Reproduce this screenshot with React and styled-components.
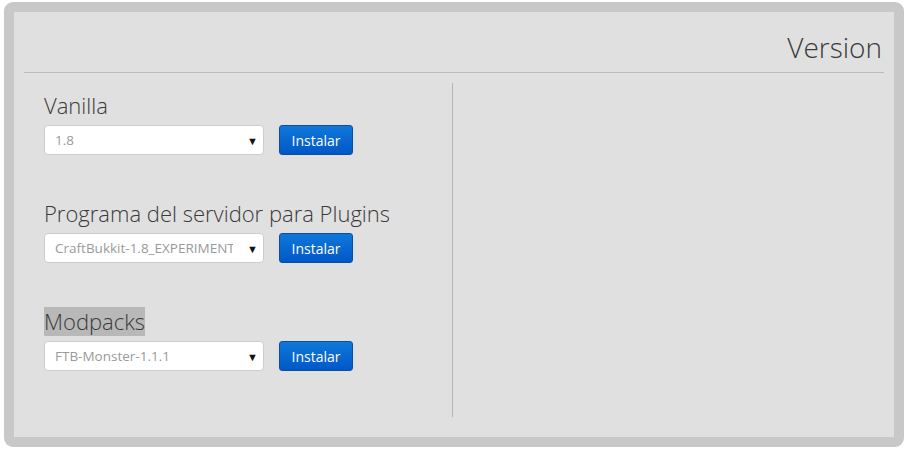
import styled, {createGlobalStyle} from 'styled-components'

const Global = createGlobalStyle`
	body {
		margin: 0;
		background: #fff;
		font-family: "Open Sans", "Liberation Sans", sans-serif;
	}
`

const groups = [
	{label: 'Vanilla', value: '1.8'},
	{label: 'Programa del servidor para Plugins', value: 'CraftBukkit-1.8_EXPERIMENTAL'},
	{label: 'Modpacks', value: 'FTB-Monster-1.1.1', marked: true},
]

function App() {
	return (
		<>
			<Global />
			<Page>
				<Frame>
					<Panel>
						<Header>
							<Title>Version</Title>
						</Header>
						<Body>
							<Column>
								{groups.map((g) => (
									<Group key={g.label}>
										<Label $marked={g.marked}>{g.label}</Label>
										<Row>
											<Select>
												<Value>{g.value}</Value>
												<Arrow>▼</Arrow>
											</Select>
											<Button>Instalar</Button>
										</Row>
									</Group>
								))}
							</Column>
						</Body>
					</Panel>
				</Frame>
			</Page>
		</>
	)
}

const Page = styled.div`
	padding: 2px 4px;
`

const Frame = styled.div`
	width: 900px;
	height: 445px;
	box-sizing: border-box;
	background: #c8c8c8;
	border-radius: 9px;
	padding: 10px;
`

const Panel = styled.div`
	height: 100%;
	background: #e0e0e0;
	padding: 0 10px;
	box-sizing: border-box;
`

const Header = styled.div`
	height: 60px;
	border-bottom: 1px solid #bcbcbc;
	display: flex;
	justify-content: flex-end;
	align-items: flex-end;
	padding-right: 2px;
`

const Title = styled.h1`
	margin: 0 0 7px;
	font-size: 28px;
	font-weight: 300;
	color: #3a3a3a;
	line-height: 1.2;
`

const Body = styled.div`
	display: flex;
	padding-top: 10px;
`

const Column = styled.div`
	width: 429px;
	height: 334px;
	border-right: 1px solid #b4b4b4;
	box-sizing: border-box;
	padding: 8px 0 0 20px;
	display: flex;
	flex-direction: column;
	gap: 44px;
`

const Group = styled.div`
	display: flex;
	flex-direction: column;
	align-items: flex-start;
	gap: 5px;
`

const Label = styled.div`
	font-size: 22px;
	font-weight: 300;
	color: #3a3a3a;
	line-height: 29px;
	background: ${(p) => (p.$marked ? '#b8b8b8' : 'transparent')};
`

const Row = styled.div`
	display: flex;
	align-items: center;
	gap: 15px;
`

const Select = styled.div`
	width: 220px;
	height: 30px;
	box-sizing: border-box;
	background: #fff;
	border: 1px solid #ccc;
	border-radius: 4px;
	display: flex;
	align-items: center;
	padding: 0 5px 0 10px;
	overflow: hidden;
`

const Value = styled.span`
	flex: 1;
	min-width: 0;
	font-size: 13.5px;
	color: #9a9a9a;
	white-space: nowrap;
	overflow: hidden;
	text-overflow: clip;
`

const Arrow = styled.span`
	font-size: 11px;
	color: #111;
	margin-left: 14px;
`

const Button = styled.button`
	height: 30px;
	width: 74px;
	box-sizing: border-box;
	border: 1px solid #0a4ea0;
	border-radius: 3px;
	background: linear-gradient(#1078d8, #0058c8);
	color: #fff;
	font-family: "Open Sans", "Liberation Sans", sans-serif;
	font-size: 14px;
	padding: 0;
`

export default App
